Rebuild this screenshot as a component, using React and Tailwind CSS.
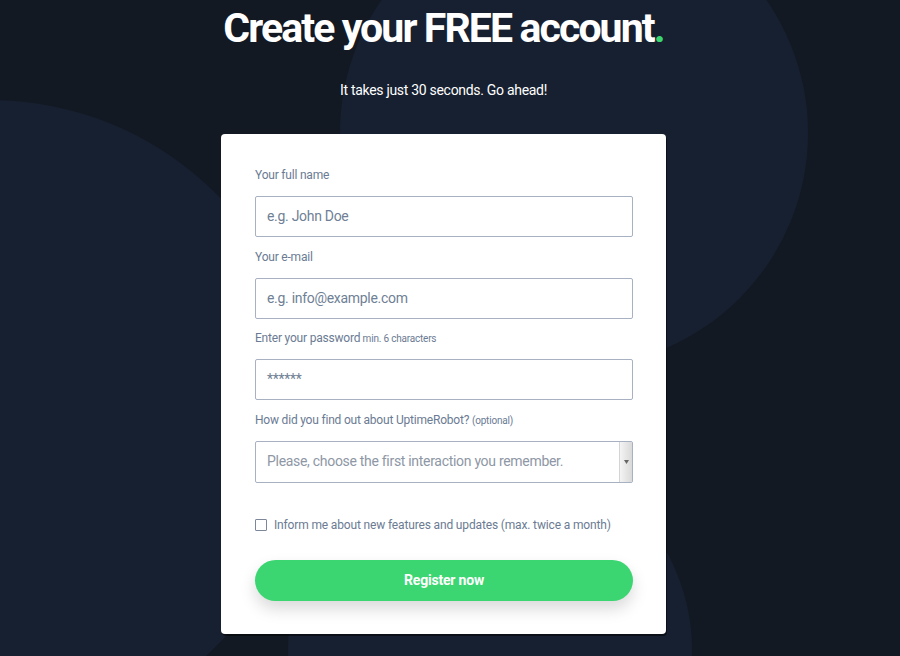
export default function App() {
  return (
    <div
      className="relative h-[656px] w-full overflow-hidden bg-[#131923]"
      style={{ fontFamily: "Roboto, 'Liberation Sans', sans-serif" }}
    >
      {/* background blobs */}
      <div className="absolute left-[340px] top-[-101px] h-[468px] w-[468px] rounded-full bg-[#172030]" />
      <div className="absolute left-[-330px] top-[100px] h-[640px] w-[640px] rounded-full bg-[#172030]" />
      <div className="absolute left-[288px] top-[448px] h-[404px] w-[404px] rounded-full bg-[#172030]" />

      <div className="relative flex flex-col items-center pr-[13px]">
        <h1 className="mt-[3px] text-[41px] font-bold leading-[50px] tracking-[-1.9px] text-white">
          Create your FREE account<span className="text-[#3bd671]">.</span>
        </h1>
        <p className="mt-[27px] text-[14px] leading-5 tracking-[-0.3px] text-white">
          It takes just 30 seconds. Go ahead!
        </p>

        <div className="mt-[34px] w-[445px] rounded-[4px] bg-white pb-[33px] pl-[34px] pr-[33px] pt-[33px] shadow-[1px_2px_0_rgba(0,0,0,0.5)]">
          <Field label="Your full name" placeholder="e.g. John Doe" />
          <Field label="Your e-mail" placeholder="e.g. info@example.com" />
          <Field label="Enter your password" hint="min. 6 characters" placeholder="******" />

          <div className="mb-[13px] h-4 text-[12px] leading-4 tracking-[-0.2px] text-[#6b7b93]">
            How did you find out about UptimeRobot?{" "}
            <span className="text-[10px] leading-none">(optional)</span>
          </div>
          <div className="flex h-[42px] items-stretch rounded-[2px] border border-[#a7b1c2]">
            <div className="flex flex-1 items-center pl-[11px] text-[14px] tracking-[-0.3px] text-[#8e97a5]">
              Please, choose the first interaction you remember.
            </div>
            <div className="flex w-[13px] items-center justify-center border-l border-[#d4d4d4] bg-gradient-to-r from-[#f4f4f4] to-[#d9d9d9]">
              <svg width="5" height="4" viewBox="0 0 5 4">
                <path d="M0 0h5L2.5 4z" fill="#666" />
              </svg>
            </div>
          </div>

          <label className="mt-[32px] flex h-5 items-center gap-[7px] whitespace-nowrap text-[12px] tracking-[-0.15px] text-[#6b7b93]">
            <span className="h-[12px] w-[12px] shrink-0 rounded-[1px] border border-[#7d8799]" />
            Inform me about new features and updates (max. twice a month)
          </label>

          <button className="mt-[25px] h-[41px] w-full rounded-full bg-[#3bd671] text-[14px] font-bold tracking-[-0.2px] text-white shadow-[0_8px_16px_rgba(0,0,0,0.15)]">
            Register now
          </button>
        </div>
      </div>
    </div>
  );
}

function Field({ label, hint, placeholder }) {
  return (
    <div className="mb-[11.5px]">
      <div className="mb-[13px] h-4 text-[12px] leading-4 tracking-[-0.2px] text-[#6b7b93]">
        {label}
        {hint && <span className="text-[10px] leading-none"> {hint}</span>}
      </div>
      <div className="flex h-[41px] items-center rounded-[2px] border border-[#a7b1c2] pl-[11px] text-[14px] tracking-[-0.3px] text-[#6f7f95]">
        {placeholder}
      </div>
    </div>
  );
}
